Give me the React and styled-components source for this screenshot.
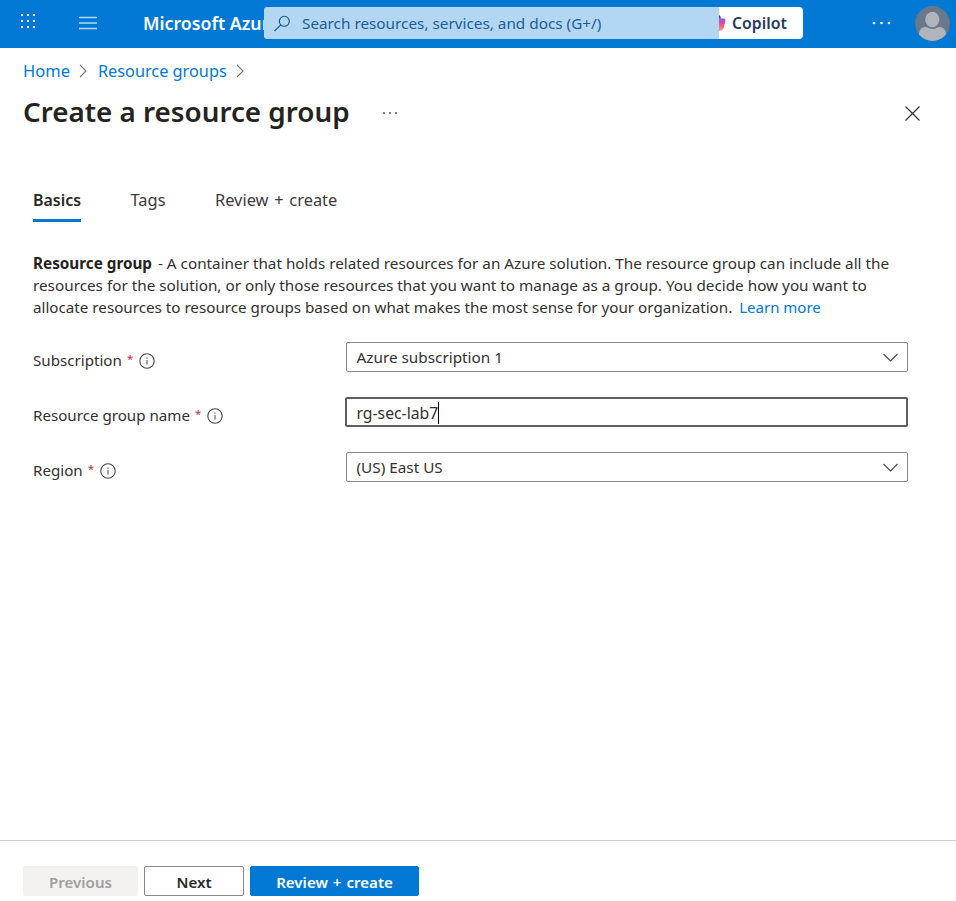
import React from 'react';
import styled, { createGlobalStyle } from 'styled-components';

const GlobalStyle = createGlobalStyle`
  * { box-sizing: border-box; }
  body {
    margin: 0;
    background: #fff;
    color: #323130;
    font-family: "Noto Sans", "Open Sans", sans-serif;
    font-size: 15.25px;
  }
  button, input { font-family: inherit; }
`;

const Page = styled.div`
  display: flex;
  flex-direction: column;
  height: 901px;
  overflow: hidden;
`;

const TopBar = styled.header`
  display: flex;
  align-items: center;
  flex: none;
  height: 48px;
  padding-bottom: 2px;
  background: #0078d4;
  color: #fff;
`;

const IconButton = styled.button`
  display: flex;
  align-items: center;
  justify-content: center;
  flex: none;
  width: ${(p) => p.$width}px;
  height: ${(p) => p.$height}px;
  margin: 0 ${(p) => p.$after || 0}px ${(p) => p.$raise || 0}px ${(p) => p.$gap || 0}px;
  padding: 0;
  border: 0;
  background: transparent;
  color: inherit;
`;

const Brand = styled.div`
  flex: none;
  width: 121px;
  margin-left: 46px;
  overflow: hidden;
  white-space: nowrap;
  font-size: 17.75px;
  line-height: 28px;
  font-weight: 600;
`;

const Search = styled.label`
  display: flex;
  align-items: center;
  flex: none;
  width: 455px;
  height: 32px;
  padding-left: 10px;
  gap: 11px;
  border-radius: 3px 0 0 3px;
  background: #b3d6f2;
  color: #0f5290;
`;

const SearchInput = styled.input`
  flex: 1;
  min-width: 0;
  padding: 0;
  border: 0;
  outline: 0;
  background: transparent;
  font-size: 15.3px;
  color: inherit;
  &::placeholder { color: #1b5d9b; opacity: 1; }
`;

const CopilotButton = styled.button`
  display: flex;
  align-items: center;
  flex: none;
  width: 84px;
  height: 32px;
  padding: 0;
  gap: 6px;
  border: 0;
  border-radius: 0 4px 4px 0;
  background: #fff;
  color: #243a5e;
  font-size: 15.8px;
  font-weight: 600;
`;

const Breadcrumb = styled.nav`
  display: flex;
  align-items: center;
  flex: none;
  height: 46px;
  padding-left: 23px;
`;

const Crumb = styled.a`
  color: #0078d4;
  font-size: ${(p) => p.$size}px;
  line-height: 24px;
`;

const CrumbArrow = styled.svg`
  width: 9px;
  height: 14px;
  margin: 0 ${(p) => p.$after}px 0 9px;
`;

const TitleRow = styled.div`
  display: flex;
  align-items: center;
  flex: none;
  height: 38px;
  padding: 0 36px 0 23px;
`;

const Title = styled.h1`
  margin: 0 0 4px;
  color: #242322;
  font-size: 27.8px;
  line-height: 38px;
  font-weight: 600;
`;

const Spacer = styled.div`
  flex: 1;
`;

const Tabs = styled.div`
  display: flex;
  flex: none;
  gap: 49.5px;
  margin: 54px 0 0 33px;
`;

const Tab = styled.button`
  height: 36px;
  padding: 0 0 ${(p) => (p.$active ? 5 : 7)}px;
  border: 0;
  border-bottom: 3px solid ${(p) => (p.$active ? '#0078d4' : 'transparent')};
  background: transparent;
  color: ${(p) => (p.$active ? '#292827' : '#3b3a39')};
  font-size: ${(p) => (p.$active ? 15.95 : 16.4)}px;
  line-height: 25px;
  font-weight: ${(p) => (p.$active ? 600 : 400)};
  word-spacing: 1.5px;
`;

const Description = styled.p`
  flex: none;
  margin: 30px 0 0 33px;
  line-height: 22px;
  white-space: nowrap;
`;

const Line = styled.span`
  display: block;
  font-size: ${(p) => p.$size}px;
`;

const Lead = styled.strong`
  margin-right: 2px;
  color: #242322;
  font-weight: 700;
`;

const LearnLink = styled.a`
  margin-left: 3px;
  color: #0078d4;
  font-size: 15px;
`;

const Form = styled.form`
  display: grid;
  flex: none;
  gap: 25px;
  margin: 24px 48px 0 33px;
`;

const Field = styled.div`
  display: grid;
  grid-template-columns: 313px 1fr;
  height: 30px;
`;

const Label = styled.label`
  display: flex;
  align-items: center;
  height: 36px;
  font-size: 15.15px;
  & > svg { margin-top: 2px; }
`;

const Required = styled.span`
  margin: 0 6px 3px 5px;
  color: #b0303a;
  font-size: 11.5px;
`;

const Select = styled.div`
  display: flex;
  align-items: center;
  justify-content: space-between;
  height: 30px;
  padding: 0 9px 0 9.5px;
  border: 1px solid #8a8886;
  border-radius: 2px;
  font-size: 15.3px;
`;

const TextBox = styled.div`
  display: flex;
  align-items: center;
  height: 30px;
  margin-left: -1px;
  padding: 1px 0 0 9.5px;
  border: 2px solid #605e5c;
  border-radius: 2px;
  font-size: 15.75px;
`;

const Caret = styled.span`
  width: 1px;
  height: 22px;
  background: #000;
`;

const Footer = styled.footer`
  display: flex;
  flex: none;
  gap: 6px;
  height: 61px;
  padding: 25px 0 0 23px;
  border-top: 1px solid #cfcdcb;
`;

const palettes = {
  disabled: { bg: '#f3f2f1', fg: '#a19f9d', line: '#f3f2f1' },
  plain: { bg: '#fff', fg: '#292827', line: '#8a8886' },
  primary: { bg: '#0078d4', fg: '#fff', line: '#0078d4' },
};

const Button = styled.button`
  width: ${(p) => p.$width}px;
  height: 30px;
  padding: 1px 0 0;
  border: 1px solid ${(p) => palettes[p.$kind].line};
  border-radius: 2px;
  background: ${(p) => palettes[p.$kind].bg};
  color: ${(p) => palettes[p.$kind].fg};
  font-size: 15.1px;
  line-height: 24px;
  font-weight: 600;
  word-spacing: 1px;
`;

const WaffleIcon = () => (
  <svg width="16" height="16" viewBox="0 0 16 16" fill="#fff">
    {[1, 7, 13].map((y) => [1, 7, 13].map((x) => (
      <rect key={`${x}-${y}`} x={x} y={y} width="2" height="2" />
    )))}
  </svg>
);

const MenuIcon = () => (
  <svg width="18" height="14" viewBox="0 0 18 14" stroke="#b9daf4" strokeWidth="1.4">
    <path d="M0 1.5h18M0 7h18M0 12.5h18" />
  </svg>
);

const SearchIcon = () => (
  <svg width="17" height="17" viewBox="0 0 17 17" fill="none" stroke="#0f5290" strokeWidth="1.1">
    <circle cx="10.3" cy="6.3" r="5" />
    <path d="M6.8 9.8.5 16" />
  </svg>
);

const CopilotMark = () => (
  <svg width="7" height="20" viewBox="0 0 7 20">
    <defs>
      <linearGradient id="copilot" x1="0" y1="0" x2="0" y2="1">
        <stop offset="0" stopColor="#a34be0" />
        <stop offset=".5" stopColor="#ee5090" />
        <stop offset="1" stopColor="#ffa45c" />
      </linearGradient>
    </defs>
    <path d="M0 2c1.4.3 1.6 1.6 2 3.800H0z" fill="#1f55c4" />
    <path d="M0 5.500h4.600c1.800 0 2.200 1.200 1.700 3l-1.600 6.300C4 17 2.500 18 0 18z" fill="url(#copilot)" />
  </svg>
);

const Dots = ({ color, radius, step }) => (
  <svg width={step * 2 + 4} height="4" viewBox={`0 0 ${step * 2 + 4} 4`} fill={color}>
    {[0, 1, 2].map((i) => <circle key={i} cx={2 + i * step} cy="2" r={radius} />)}
  </svg>
);

const Avatar = () => (
  <svg width="35" height="35" viewBox="0 0 35 35">
    <clipPath id="avatar"><circle cx="17.5" cy="17.5" r="17.4" /></clipPath>
    <g clipPath="url(#avatar)">
      <rect width="35" height="35" fill="#69788a" />
      <path d="M4 35v-6.500c0-4.500 2.500-7.500 6.500-7.500 2 0 3.500 2 7 2s5-2 7-2c4 0 6.500 3 6.500 7.500V35z" fill="#afb5ba" />
      <ellipse cx="17.300" cy="13.700" rx="7.900" ry="8.600" fill="#69788a" />
      <ellipse cx="17.300" cy="13.500" rx="7.100" ry="7.700" fill="#afb5ba" />
    </g>
  </svg>
);

const CloseIcon = () => (
  <svg width="16" height="16" viewBox="0 0 16 16" stroke="#323130" strokeWidth="1.2">
    <path d="M1.500 1.500l14 14M15.500 1.500l-14 14" />
  </svg>
);

const Separator = ({ after }) => (
  <CrumbArrow $after={after} viewBox="0 0 9 14" fill="none" stroke="#7a7876" strokeWidth="1.1">
    <path d="M1 1l6 6-6 6" />
  </CrumbArrow>
);

const InfoIcon = () => (
  <svg width="16" height="16" viewBox="0 0 16 16">
    <circle cx="8" cy="8" r="7.2" fill="none" stroke="#484644" strokeWidth="1.1" />
    <path d="M7.500 4.500h1v1.200h-1zM7.500 7h1v4.500h-1z" fill="#484644" />
  </svg>
);

const ChevronDown = () => (
  <svg width="15" height="9" viewBox="0 0 15 9" fill="none" stroke="#484644" strokeWidth="1.1">
    <path d="M.5 1l7 7 7-7" />
  </svg>
);

const FormField = ({ label, children }) => (
  <Field>
    <Label>{label}<Required>*</Required><InfoIcon /></Label>
    {children}
  </Field>
);

export default function App() {
  return (
    <Page>
      <GlobalStyle />
      <TopBar>
        <IconButton $width={16} $height={16} $gap={20} $raise={4}><WaffleIcon /></IconButton>
        <IconButton $width={18} $height={46} $gap={43}><MenuIcon /></IconButton>
        <Brand>Microsoft Azure</Brand>
        <Search>
          <SearchIcon />
          <SearchInput placeholder="Search resources, services, and docs (G+/)" />
        </Search>
        <CopilotButton><CopilotMark />Copilot</CopilotButton>
        <Spacer />
        <IconButton $width={20} $height={46}><Dots color="#fff" radius={1.3} step={7.5} /></IconButton>
        <IconButton $width={35} $height={46} $gap={24} $after={6}><Avatar /></IconButton>
      </TopBar>
      <Breadcrumb>
        <Crumb $size={16.5}>Home</Crumb>
        <Separator after={10} />
        <Crumb $size={16.3}>Resource groups</Crumb>
        <Separator after={0} />
      </Breadcrumb>
      <TitleRow>
        <Title>Create a resource group</Title>
        <IconButton $width={18} $height={38} $gap={31}><Dots color="#484644" radius={0.9} step={6} /></IconButton>
        <Spacer />
        <IconButton $width={16} $height={38}><CloseIcon /></IconButton>
      </TitleRow>
      <Tabs>
        <Tab $active>Basics</Tab>
        <Tab>Tags</Tab>
        <Tab>Review + create</Tab>
      </Tabs>
      <Description>
        <Line $size={15.28}>
          <Lead>Resource group</Lead> - A container that holds related resources for an Azure solution. The resource group can include all the
        </Line>
        <Line $size={15.29}>
          resources for the solution, or only those resources that you want to manage as a group. You decide how you want to
        </Line>
        <Line $size={15.2}>
          allocate resources to resource groups based on what makes the most sense for your organization. <LearnLink>Learn more</LearnLink>
        </Line>
      </Description>
      <Form>
        <FormField label="Subscription">
          <Select>Azure subscription 1<ChevronDown /></Select>
        </FormField>
        <FormField label="Resource group name">
          <TextBox>rg-sec-lab7<Caret /></TextBox>
        </FormField>
        <FormField label="Region">
          <Select>(US) East US<ChevronDown /></Select>
        </FormField>
      </Form>
      <Spacer />
      <Footer>
        <Button $kind="disabled" $width={115}>Previous</Button>
        <Button $kind="plain" $width={100}>Next</Button>
        <Button $kind="primary" $width={169}>Review + create</Button>
      </Footer>
    </Page>
  );
}
